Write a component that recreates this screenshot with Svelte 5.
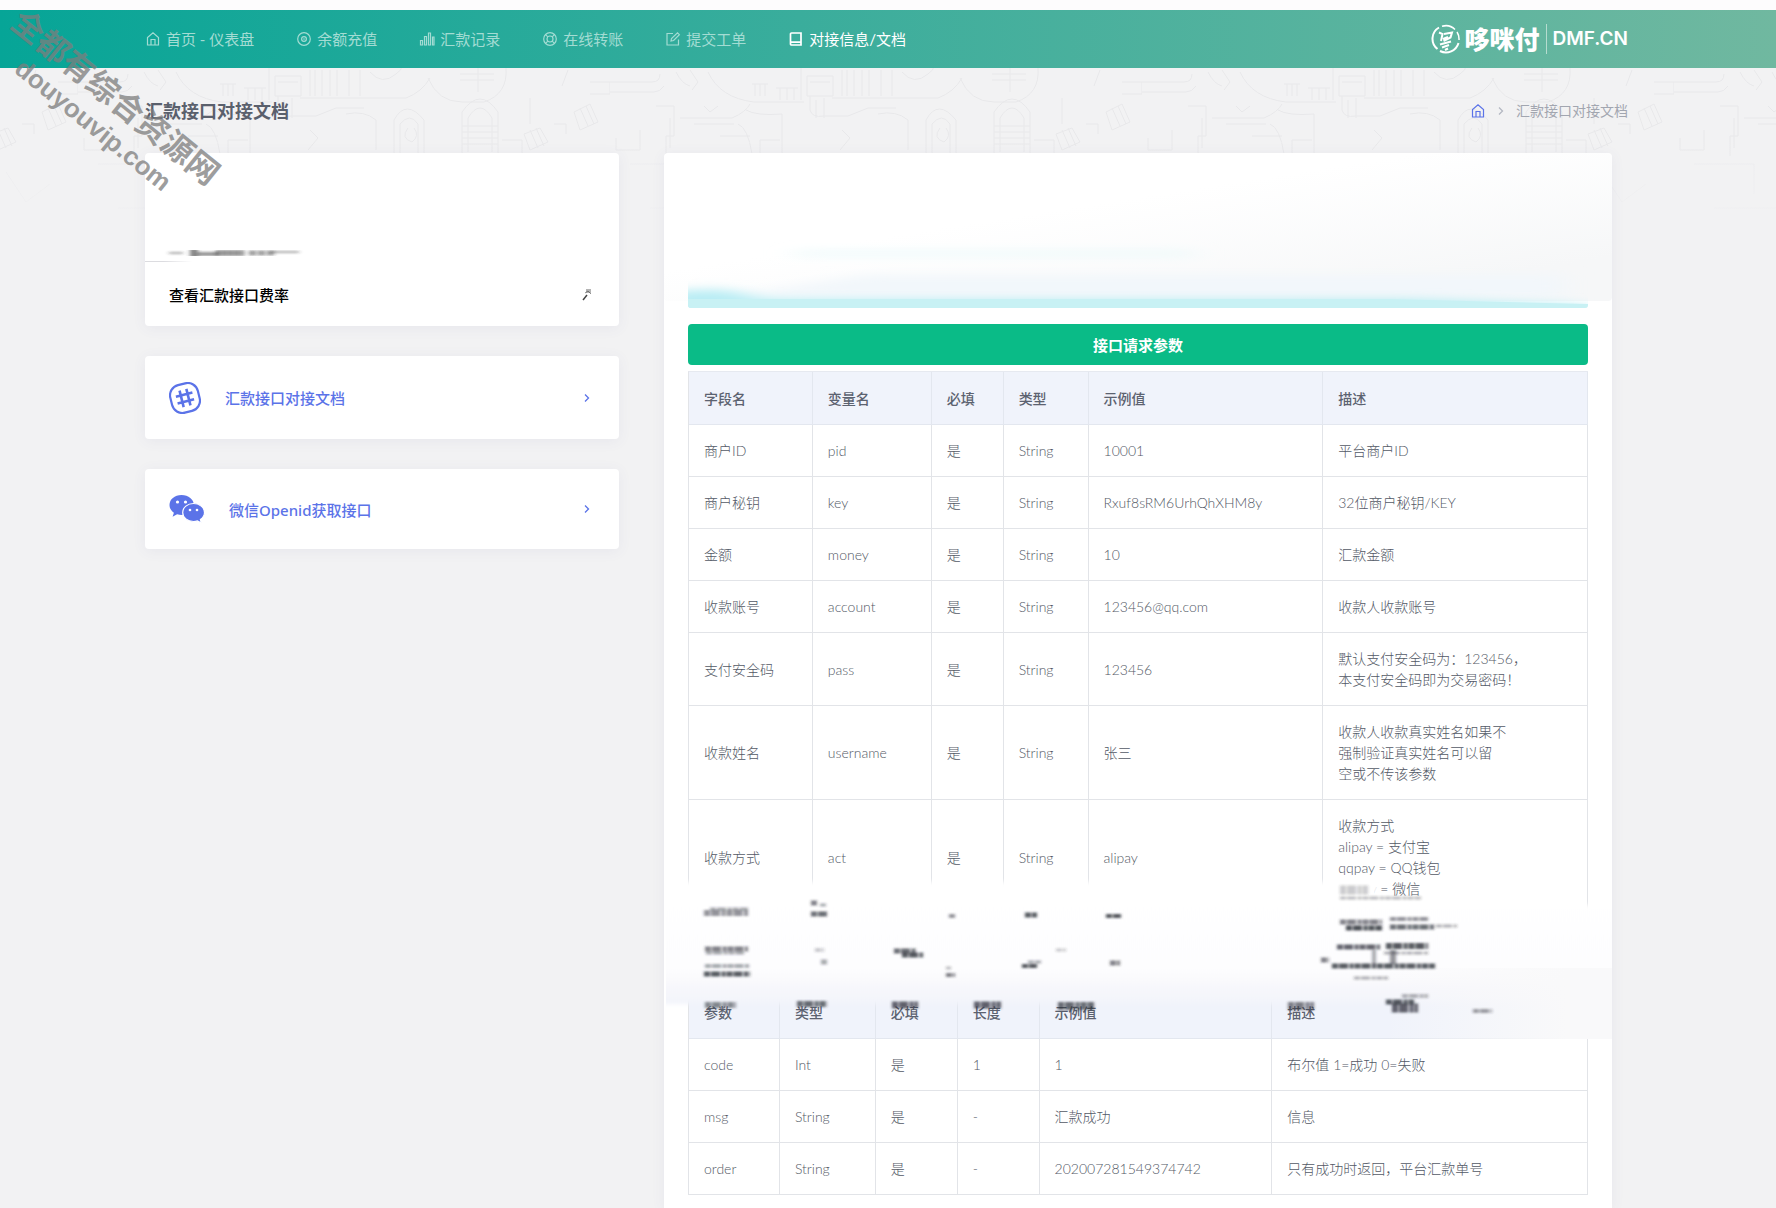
<script>
  const nav = [
    { label: '首页 - 仪表盘', icon: 'home' },
    { label: '余额充值', icon: 'target' },
    { label: '汇款记录', icon: 'bars' },
    { label: '在线转账', icon: 'buoy' },
    { label: '提交工单', icon: 'edit' },
    { label: '对接信息/文档', icon: 'book', active: true }
  ];

  const request = {
    widths: [124, 119, 72, 85, 235, 265],
    head: ['字段名', '变量名', '必填', '类型', '示例值', '描述'],
    rows: [
      ['商户ID', 'pid', '是', 'String', '10001', '平台商户ID'],
      ['商户秘钥', 'key', '是', 'String', 'Rxuf8sRM6UrhQhXHM8y', '32位商户秘钥/KEY'],
      ['金额', 'money', '是', 'String', '10', '汇款金额'],
      ['收款账号', 'account', '是', 'String', '123456@qq.com', '收款人收款账号'],
      ['支付安全码', 'pass', '是', 'String', '123456', '默认支付安全码为：123456，\n本支付安全码即为交易密码！'],
      ['收款姓名', 'username', '是', 'String', '张三', '收款人收款真实姓名如果不\n强制验证真实姓名可以留\n空或不传该参数'],
      ['收款方式', 'act', '是', 'String', 'alipay', '收款方式\nalipay = 支付宝\nqqpay = QQ钱包\nwxpay = 微信']
    ]
  };

  const response = {
    widths: [91, 96, 82, 82, 233, 316],
    head: ['参数', '类型', '必填', '长度', '示例值', '描述'],
    rows: [
      ['code', 'Int', '是', '1', '1', '布尔值 1=成功 0=失败'],
      ['msg', 'String', '是', '-', '汇款成功', '信息'],
      ['order', 'String', '是', '-', '202007281549374742', '只有成功时返回，平台汇款单号']
    ]
  };

  // Smudges over the hidden rows: x1, x2, y, thickness, opacity
  const smudges = [
    [40, 85, 35, 6, 0.5], [46, 84, 31, 3, 0.4], [147, 154, 25, 5, 0.6], [147, 163, 36, 5, 0.7],
    [156, 162, 27, 3, 0.4], [285, 292, 38, 4, 0.5], [361, 373, 37, 5, 0.8], [442, 457, 38, 4, 0.8],
    [41, 84, 71, 5, 0.6], [42, 80, 75, 3, 0.4], [41, 85, 88, 4, 0.4], [40, 86, 96, 5, 0.8],
    [151, 160, 72, 4, 0.25], [157, 164, 84, 5, 0.4], [230, 252, 73, 5, 0.7], [238, 259, 77, 5, 0.8],
    [282, 287, 90, 3, 0.3], [282, 291, 97, 4, 0.6], [364, 377, 84, 3, 0.4], [358, 373, 88, 4, 0.8],
    [392, 402, 72, 3, 0.25], [446, 456, 85, 5, 0.6],
    [41, 72, 127, 6, 0.55], [133, 163, 126, 6, 0.7], [228, 254, 127, 7, 0.75], [310, 337, 127, 7, 0.75],
    [394, 430, 128, 8, 0.7], [624, 650, 128, 8, 0.6],
    [676, 704, 12, 9, 0.25], [676, 757, 20, 3, 0.3], [676, 718, 44, 5, 0.6], [682, 718, 50, 5, 0.85],
    [726, 764, 41, 4, 0.5], [726, 770, 49, 5, 0.7], [772, 793, 48, 3, 0.35],
    [673, 716, 69, 5, 0.75], [722, 764, 68, 6, 0.8], [668, 771, 88, 5, 0.8], [720, 764, 75, 3, 0.35],
    [708, 712, 79, 14, 0.4], [726, 733, 79, 14, 0.5], [657, 665, 82, 5, 0.6], [690, 724, 100, 3, 0.35],
    [722, 750, 124, 5, 0.8], [728, 754, 130, 9, 0.75], [738, 764, 118, 4, 0.35], [809, 828, 133, 4, 0.45]
  ];
</script>

{#snippet glyph(name)}
  <svg class="glyph" viewBox="0 0 16 16" fill="none" stroke="currentColor" stroke-width="1.200" aria-hidden="true">
    {#if name === 'home'}
      <path d="M2.5 6.5v7.5h11V6.5L8 1.8Z M6 14V8.5h4V14" />
    {:else if name === 'target'}
      <circle cx="8" cy="8" r="6.3" /><circle cx="8" cy="8" r="2.4" /><path d="M8 7.3v1.4" />
    {:else if name === 'bars'}
      <path d="M1.5 9.5h2v4.500h-2Z M5.500 5.500h2V14h-2Z M9.500 2h2v12h-2Z M13.500 6h1.500v8h-1.500Z" />
    {:else if name === 'buoy'}
      <circle cx="8" cy="8" r="6.3" /><circle cx="8" cy="8" r="3" />
      <path d="M3.600 3.600l2.200 2.200M12.400 3.600l-2.200 2.200M3.600 12.400l2.200-2.200M12.400 12.400l-2.200-2.200" />
    {:else if name === 'edit'}
      <path d="M8 2.500H2v11.500h11.500V8.500 M6 10l.5-2.500L12.500 1.800l1.900 1.900L8.600 9.500Z" />
    {:else}
      <path stroke-width="1.700" d="M3.500 2h9.500v12H3.500a1 1 0 0 1-1-1V3a1 1 0 0 1 1-1Z M2.500 11.200H13" />
    {/if}
  </svg>
{/snippet}

{#snippet chevron()}
  <svg class="chevron" viewBox="0 0 8 10" fill="none" stroke="currentColor" stroke-width="1.300" aria-hidden="true">
    <path d="M2 1.500l3.500 3.500-3.500 3.500" />
  </svg>
{/snippet}

{#snippet grid(data)}
  <table>
    <colgroup>
      {#each data.widths as w}<col style="width: {w / 9}%" />{/each}
    </colgroup>
    <thead>
      <tr>{#each data.head as h}<th scope="col">{h}</th>{/each}</tr>
    </thead>
    <tbody>
      {#each data.rows as row}
        <tr>{#each row as cell}<td>{cell}</td>{/each}</tr>
      {/each}
    </tbody>
  </table>
{/snippet}

<div class="page">
  <svg class="doodles" aria-hidden="true">
    <defs>
      <pattern id="doodle" x="78" y="0" width="532" height="200" patternUnits="userSpaceOnUse">
        <g fill="none" stroke="#e8e8ea" stroke-width="1">
          <path d="M0 14h42q8 0 8-8M0 24h44q6 0 10-6M66 4q6 12 14 14M80 2l8 12-6 8" />
          <path d="M98 4q12 26 46 30h50M142 16h16M145 16v12M150 16v12M155 16v12M166 20h22M170 20v12M177 20v12M184 20v12" />
          <path d="M191 0v32M197 8h26v20h-26ZM200 14h20M232 2v26M237 2v26M244 2v26M252 2v26M259 2v26M271 2v26M282 2v26" />
          <path d="M222 30h106q16-6 24-20M292 4q12 14 26 2q6-4 6-8M350 10q10 24 34 24h22q24-8 22-34M382 6h34M382 12h34M400 0v24" />
          <path d="M200 28v14q2 8 14 6h24l20-8h28M206 32v18M214 30v20M46 38h18v30h-8v20M60 50v30M70 50h52q14-6 18-14M94 38l6 6 8-6M136 42q10 6 36 4v40" />
          <path d="M316 88V52q12-22 30 0v36M322 86V56q10-12 18 0v30M330 60q-8 10 4 14 8-6 2-14M384 88V44q18-26 36 0v44M390 84V50q12-20 24 0v34M384 58h36M384 64h36M384 70h36M384 76h36" />
          <path d="M496 44l16-8 8 18-18 8ZM502 40l8 18M508 38l8 18M446 66l16-6 8 14-18 8ZM452 62l8 18M458 60l8 18M424 72h20v14h-20M452 30v26M476 56h12v10M490 2l-6 16M512 14h20v12h-20" />
          <path d="M30 62v20H6V70M84 56h40M110 68h30M128 56q10 4 14 30M232 62l8 8-10 12M268 46q18-4 30 6v30M150 88v-16h20" />
          <path opacity=".5" d="M20 96h60v30M120 100q30 40 70 4v50M220 96v40h60v-30M320 100v60M326 100v60M380 96h50v40M460 104l20 30 24-18M40 140h80M180 130h60" />
        </g>
      </pattern>
      <linearGradient id="fade" x1="0" y1="0" x2="0" y2="1">
        <stop offset=".35" stop-color="#f2f2f3" stop-opacity="0" />
        <stop offset="1" stop-color="#f2f2f3" />
      </linearGradient>
    </defs>
    <rect width="100%" height="100%" fill="url(#doodle)" />
    <rect width="100%" height="100%" fill="url(#fade)" />
  </svg>

  <header>
    <nav>
      {#each nav as item}
        <a href="#nav" class:active={item.active}>{@render glyph(item.icon)}{item.label}</a>
      {/each}
    </nav>
    <a class="brand" href="#home">
      <svg viewBox="0 0 30 30" fill="none" stroke="#fff" aria-hidden="true">
        <path stroke-width="2" d="M8 3.500A13 13 0 0 0 6.500 25M9 27A13 13 0 0 0 27.500 19" />
        <path stroke-width="1.500" d="M11 2.300A13 13 0 0 1 24 5.500M26 8A13 13 0 0 1 28 16" />
        <path stroke-width="2" d="M8 8.500l3.500 1.500-1.500 7M13 10l8-1.500-1.500 5-7 3.500M12 15l5-2M9 20.500l11-3M11 23.500l7-2.500M14 26l3-1.500" />
      </svg>
      <span class="brand-name">哆咪付</span>
      <span class="brand-site">DMF.CN</span>
    </a>
  </header>

  <div class="title-bar">
    <h1>汇款接口对接文档</h1>
    <div class="crumbs">
      <a href="#home" aria-label="首页">{@render glyph('home')}</a>
      {@render chevron()}
      <span>汇款接口对接文档</span>
    </div>
  </div>

  <main>
    <aside>
      <section class="card">
        <svg class="profile" viewBox="0 0 474 109" preserveAspectRatio="none" aria-hidden="true">
          <defs>
            <filter id="soft" x="-10%" y="-100%" width="120%" height="300%"><feGaussianBlur stdDeviation="2 1.300" /></filter>
            <linearGradient id="rule"><stop offset=".04" stop-color="#dcdce0" /><stop offset=".1" stop-color="#dcdce0" stop-opacity="0" /></linearGradient>
          </defs>
          <g filter="url(#soft)" stroke="#333" fill="none">
            <path stroke-width="2" opacity=".4" d="M24 100h14M126 99h28" />
            <path stroke-width="9" opacity=".6" d="M45 100h8" />
            <path stroke-width="4" opacity=".5" d="M53 101h20" />
            <path stroke-width="6" opacity=".6" stroke-dasharray="5 1" d="M71 100h28" />
            <path stroke-width="5" opacity=".5" stroke-dasharray="7 2" d="M104 100h26" />
          </g>
          <rect y="108" width="474" height="1" fill="url(#rule)" />
        </svg>
        <a class="rate" href="#rate">
          查看汇款接口费率
          <svg viewBox="0 0 12 14" fill="none" stroke="#444" aria-hidden="true">
            <path stroke-width="1.500" d="M2 13l4-5" /><path stroke-width="4" opacity=".4" d="M5 4h5" /><path opacity=".6" d="M4 6l3-2 3 3" />
          </svg>
        </a>
      </section>

      <a class="card link doc" href="#doc">
        <svg class="hash" viewBox="0 0 32 32" fill="none" stroke="#5b73e8" aria-hidden="true">
          <g transform="rotate(-14 16 16)" stroke-width="2.200">
            <rect x="1.800" y="1.800" width="28.400" height="28.400" rx="10.500" />
            <path stroke-width="2.600" d="M12.500 7.500v17M19.500 7.500v17M7.500 12.500h17M7.500 19.500h17" />
          </g>
        </svg>
        <span>汇款接口对接文档</span>
        {@render chevron()}
      </a>

      <a class="card link" href="#openid">
        <svg class="wechat" viewBox="0 0 36 30" aria-hidden="true">
          <path fill="#5b73e8" d="M12.500 1C5.600 1 .5 5.400.5 11c0 3.200 1.700 5.900 4.400 7.700l-1.300 4 4.500-2.400c1.600.5 3 .7 4.800.7 7-.2 12-4.500 12-10S19.500 1 12.500 1Z" />
          <path fill="#5b73e8" stroke="#fff" stroke-width="1.200" d="M24.500 9.500c-6 0-10.800 4-10.800 9s4.800 9 10.800 9c1.300 0 2.700-.2 3.900-.6l4 2.200-1-3.500c2.600-1.800 4.100-4.300 4.100-7.100 0-5-5-9-11-9Z" />
          <g fill="#fff"><circle cx="8.500" cy="8" r="1.600" /><circle cx="16.500" cy="8" r="1.600" /><circle cx="21" cy="16" r="1.300" /><circle cx="28" cy="16" r="1.300" /></g>
        </svg>
        <span>微信Openid获取接口</span>
        {@render chevron()}
      </a>
    </aside>

    <section class="card doc-card">
      <svg class="notice" viewBox="0 0 948 155" preserveAspectRatio="none" aria-hidden="true">
        <defs>
          <filter id="mist" x="-10%" y="-50%" width="120%" height="200%"><feGaussianBlur stdDeviation="14 5" /></filter>
          <clipPath id="alert"><path d="M24 90h900v62q0 3-3 3H27q-3 0-3-3Z" /></clipPath>
          <linearGradient id="haze" x1="0" y1="0" x2="1" y2="1">
            <stop offset=".4" stop-color="#f7f8f9" stop-opacity="0" /><stop offset=".85" stop-color="#f6f7f8" />
          </linearGradient>
        </defs>
        <rect width="948" height="148" fill="url(#haze)" rx="4" />
        <g filter="url(#mist)">
          <path fill="#eaf9fa" d="M130 98h400v5H130Z" />
          <path fill="#f2f7fb" d="M200 122h700v22H60Z" />
        </g>
        <g clip-path="url(#alert)">
          <path filter="url(#mist)" fill="#b9edf4" d="M0 138l60-2 40 10h650l174 6v20H0Z" />
          <path fill="#c8f1f4" d="M24 146h700l200 5v6H24Z" />
        </g>
      </svg>

      <div class="body">
        <button type="button">接口请求参数</button>
        {@render grid(request)}
        <div class="hidden-rows">
          <svg viewBox="0 0 948 160" aria-hidden="true">
            <defs>
              <filter id="smear" x="-5%" y="-10%" width="110%" height="120%"><feGaussianBlur stdDeviation="1.800 1.100" /></filter>
              <filter id="edge"><feGaussianBlur stdDeviation="0 2" /></filter>
              <linearGradient id="veil" x1="0" y1="0" x2="0" y2="1">
                <stop offset="0" stop-color="#fff" /><stop offset=".72" stop-color="#fdfdfe" />
                <stop offset=".84" stop-color="#f8f8fc" /><stop offset="1" stop-color="#f2f4fb" />
              </linearGradient>
              <linearGradient id="side"><stop offset="0" stop-color="#f9f9fa" stop-opacity="0" /><stop offset=".8" stop-color="#f9f9fa" /></linearGradient>
            </defs>
            <path filter="url(#edge)" fill="url(#veil)" d="M2 4h708v23h238v99H2Z" />
            <rect x="720" y="90" width="228" height="71" fill="url(#side)" />
            <rect x="672" y="4" width="42" height="18" fill="#fff" opacity=".85" />
            <g filter="url(#smear)" stroke="#2c2f38">
              {#each smudges as [x1, x2, y, t, o]}
                <path d="M{x1} {y}H{x2}" stroke-width={t} opacity={o} stroke-dasharray="6 1 9 1.500 4 1" />
              {/each}
            </g>
          </svg>
        </div>
        {@render grid(response)}
      </div>
    </section>
  </main>

  <div class="watermark" aria-hidden="true">
    <span class="cn">全都有综合资源网</span>
    <span class="en">douyouvip.com</span>
  </div>
</div>

<style>
  :global(body) {
    margin: 0;
    background: #f2f2f3;
  }

  .page {
    position: relative;
    display: flex;
    flex-direction: column;
    min-height: 100vh;
    box-sizing: border-box;
    padding-top: 10px;
    overflow: hidden;
    background: linear-gradient(#fdfcfd 10px, #f2f2f3 10px);
    font-family: Lato, 'Noto Sans CJK SC', sans-serif;
    color: #535966;
  }

  a {
    color: inherit;
    text-decoration: none;
  }

  .doodles {
    position: absolute;
    top: 68px;
    left: 0;
    width: 100%;
    height: 200px;
  }

  header,
  .title-bar,
  main {
    position: relative;
    display: flex;
    padding: 0 148px 0 145px;
  }

  header {
    height: 58px;
    align-items: center;
    justify-content: space-between;
    background: linear-gradient(90deg, #06a597, #3aad9c 45%, #70b8a0);
  }

  nav {
    display: flex;
    gap: 42px;
  }

  nav a {
    display: flex;
    align-items: center;
    gap: 5px;
    font-size: 15px;
    line-height: 22px;
    color: #a3dcd3;
    white-space: nowrap;
  }

  nav a.active {
    color: #fff;
  }

  .glyph {
    width: 16px;
    height: 16px;
    flex: none;
  }

  .brand {
    display: flex;
    align-items: center;
    color: #fff;
    font-weight: 700;
    white-space: nowrap;
  }

  .brand svg {
    width: 30px;
    height: 30px;
    margin-right: 4px;
  }

  .brand-name {
    font-size: 25px;
    line-height: 30px;
    font-weight: 900;
    padding-right: 6px;
    border-right: 1px solid #b5dccf;
  }

  .brand-site {
    padding-left: 6px;
    font: 600 19px/30px Inter, sans-serif;
  }

  .title-bar {
    height: 85px;
    align-items: center;
    justify-content: space-between;
  }

  h1 {
    margin: 0;
    font-size: 18px;
    line-height: 24px;
    font-weight: 700;
    color: #5a606c;
  }

  .crumbs {
    display: flex;
    align-items: center;
    gap: 11px;
    font-size: 14px;
    line-height: 20px;
    color: #a2a6b0;
  }

  .crumbs a {
    display: flex;
    color: #5b73e8;
  }

  .crumbs :global(.chevron) {
    color: #b4b8c2;
  }

  .chevron {
    width: 8px;
    height: 10px;
    flex: none;
  }

  main {
    flex: 1;
    gap: 45px;
    padding-right: 164px;
  }

  aside {
    flex: 1 1 0;
    display: flex;
    flex-direction: column;
    gap: 30px;
  }

  .card {
    display: block;
    background: #fff;
    border-radius: 4px;
    box-shadow: 0 2px 14px rgba(90, 90, 150, 0.07);
  }

  .profile {
    display: block;
    width: 100%;
    height: 109px;
  }

  .rate {
    display: flex;
    align-items: center;
    justify-content: space-between;
    height: 64px;
    padding: 0 26px 0 24px;
    font-size: 15px;
    font-weight: 500;
    color: #000;
  }

  .rate svg {
    width: 12px;
    height: 14px;
  }

  .link {
    display: flex;
    align-items: center;
    gap: 24px;
    height: 80px;
    padding: 0 28px 0 24px;
    font-family: 'Noto Sans', 'Noto Sans CJK SC', sans-serif;
    font-size: 15px;
    font-weight: 500;
    color: #5b73e8;
  }

  .link.doc {
    height: 83px;
  }

  .link span {
    flex: 1;
  }

  .hash {
    width: 32px;
    height: 32px;
  }

  .wechat {
    width: 36px;
    height: 30px;
  }

  .doc-card {
    flex: 2 1 0;
    min-width: 0;
    border-radius: 4px 4px 0 0;
  }

  .notice {
    display: block;
    width: 100%;
    height: 155px;
  }

  .body {
    padding: 16px 24px 10px;
  }

  button {
    display: block;
    width: 100%;
    height: 41px;
    margin-bottom: 6px;
    border: 0;
    border-radius: 4px;
    background: #0abb87;
    color: #fff;
    font: 700 15px/22px Lato, 'Noto Sans CJK SC', sans-serif;
  }

  table {
    width: 100%;
    table-layout: fixed;
    border-spacing: 0;
    border-top: 1px solid #e6e9f0;
    border-left: 1px solid #e2e4e8;
    font-size: 14px;
    line-height: 21px;
  }

  th,
  td {
    padding: 15px;
    text-align: left;
    vertical-align: middle;
    white-space: pre-line;
    border-right: 1px solid #e2e4e8;
    border-bottom: 1px solid #e2e4e8;
    font-weight: 300;
  }

  th {
    padding-top: 16px;
    background: #f0f3fb;
    border-color: #e3e7ef;
    font-weight: 500;
    color: #5c6270;
  }

  .hidden-rows {
    position: relative;
    height: 70px;
    margin: 0 -24px;
  }

  .hidden-rows svg {
    position: absolute;
    top: -37px;
    left: 0;
    width: 100%;
    overflow: visible;
  }

  .watermark {
    position: absolute;
    top: 97px;
    left: 116px;
    color: rgba(125, 125, 125, 0.75);
    font-weight: 700;
    white-space: nowrap;
    line-height: 32px;
    transform: rotate(39deg);
    width: 0;
    height: 0;
  }

  .watermark span {
    position: absolute;
    transform: translate(-50%, -50%);
  }

  .cn {
    font-size: 32px;
  }

  .en {
    top: 36px;
    font-family: 'Liberation Sans', sans-serif;
    font-size: 26px;
  }
</style>
